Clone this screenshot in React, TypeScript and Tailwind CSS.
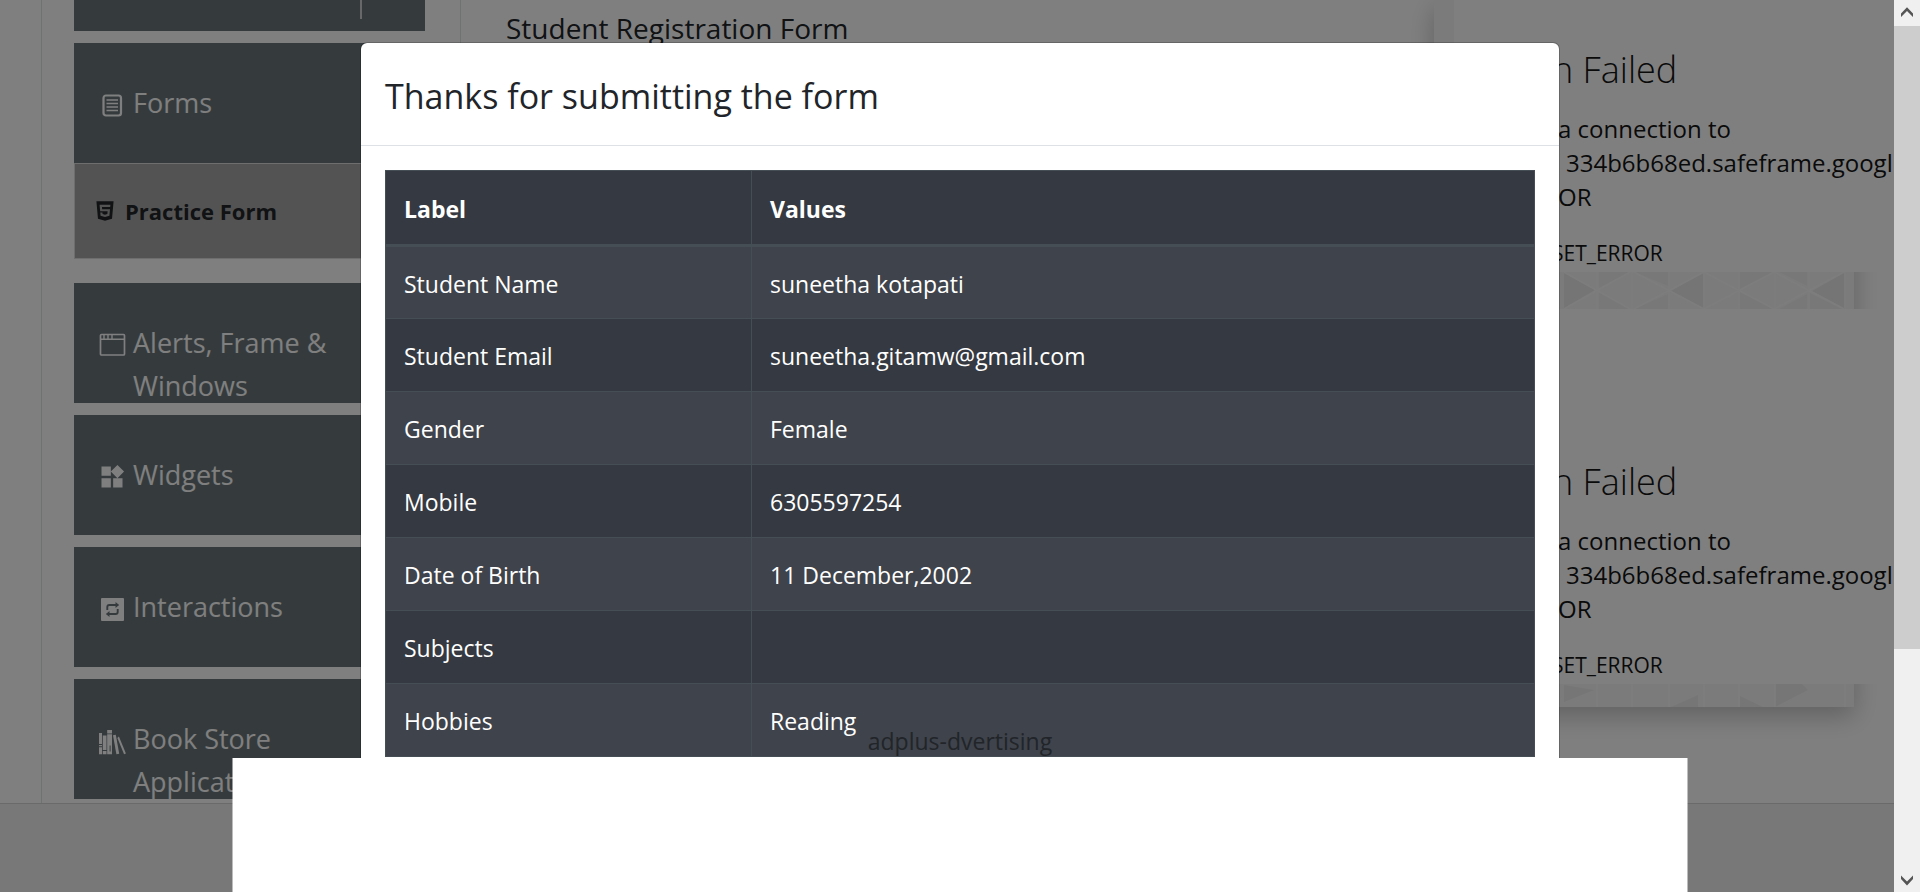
import type { ReactNode } from "react";
import { MdWidgets } from "react-icons/md";
import { AiFillHtml5 } from "react-icons/ai";

const FormsIcon = () => (
  <svg viewBox="0 0 28 28" className="size-7" fill="none" stroke="currentColor" aria-hidden="true">
    <rect x="5.5" y="4.500" width="17.500" height="20" rx="2.500" strokeWidth="2.200" />
    <path d="M8.5 9h11.500M8.5 12.500h11.500M8.5 16h11.500M8.5 19.500h11.500" strokeWidth="1.300" />
  </svg>
);

const WindowIcon = () => (
  <svg viewBox="0 0 28 28" className="size-7" fill="none" stroke="currentColor" aria-hidden="true">
    <rect x="2.500" y="3.5" width="24" height="20.5" rx="1" strokeWidth="1.7" />
    <path d="M2 8.200h24.500M6 3.5v4.500M10 3.5v4.500M14 3.5v4.500" strokeWidth="1.4" />
  </svg>
);

const RepeatIcon = () => (
  <svg viewBox="0 0 28 28" className="size-7" aria-hidden="true">
    <rect x="3" y="3" width="23" height="23" rx="1" fill="currentColor" />
    <g fill="none" stroke="#6b767b" strokeWidth="1.9">
      <path d="M9.3 15v-3q0-2 2-2h7.500M19.700 14v3q0 2-2 2h-7.500" />
    </g>
    <path d="M17.500 7l3.700 3-3.700 3zM11.500 16l-3.700 3 3.700 3z" fill="#6b767b" />
  </svg>
);

const BooksIcon = () => (
  <svg viewBox="0 0 28 28" className="size-7" fill="currentColor" aria-hidden="true">
    <path d="M1 6h3v11H1zM1 18h3v1.200H1zM1 20.200h3v7H1z" />
    <path d="M4.800 8.500h3.700v14.500H4.800zM4.800 24h3.700v3.200H4.800z" />
    <path
      fillRule="evenodd"
      d="M9.200 3h4.800v24.200H9.200zM11.600 18.500v6h1v-6zM9.200 6.500v.8h4.800v-.8z"
    />
    <path d="M15 8.200l2.800-.5 3.400 19-2.800.5z" />
    <path d="M19.400 11l1.500-1.400 7 16.800-1.800.8z" />
  </svg>
);

const rows: { label: string; value: string }[] = [
  { label: "Student Name", value: "suneetha kotapati" },
  { label: "Student Email", value: "suneetha.gitamw@gmail.com" },
  { label: "Gender", value: "Female" },
  { label: "Mobile", value: "6305597254" },
  { label: "Date of Birth", value: "11 December,2002" },
  { label: "Subjects", value: "" },
  { label: "Hobbies", value: "Reading" },
];

function MenuGroup({ icon, label }: { icon: ReactNode; label: string }) {
  return (
    <a href="#" className="flex h-[120px] overflow-hidden bg-[#6b767b] pt-[38px] pl-6 text-white">
      <span className="mt-2 flex h-8 w-7 shrink-0 items-center justify-center">{icon}</span>
      <span className="ml-[7px] w-[220px] text-[27px] leading-[43px]">{label}</span>
    </a>
  );
}

function Sidebar() {
  return (
    <nav className="flex w-[351px] shrink-0 flex-col gap-3">
      <div className="flex h-[31px] justify-end bg-[#6b767b] pr-[63px]">
        <span className="h-[19px] w-0.5 bg-[#d0d0d0]" />
      </div>
      <div className="mb-3">
        <MenuGroup icon={<FormsIcon />} label="Forms" />
        <a
          href="#"
          className="flex h-24 items-center gap-2 border border-[#dcdcdc] bg-[#a7a7a7] pl-[18px] text-[22px] font-bold text-[#212529]"
        >
          <AiFillHtml5 className="size-6" />
          Practice Form
        </a>
      </div>
      <MenuGroup icon={<WindowIcon />} label="Alerts, Frame & Windows" />
      <MenuGroup icon={<MdWidgets className="size-7" />} label="Widgets" />
      <MenuGroup icon={<RepeatIcon />} label="Interactions" />
      <MenuGroup icon={<BooksIcon />} label="Book Store Application" />
    </nav>
  );
}

function FailedFrame() {
  return (
    <section className="ml-5 flex h-[375px] w-[440px] shrink-0 flex-col justify-end overflow-hidden bg-white pb-1 pl-[98px] whitespace-nowrap text-[#141414]">
      <h2 className="text-[36px] leading-[48px] font-light">n Failed</h2>
      <p className="mt-[18px] flex flex-col pl-1.5 text-[24px] leading-[34px]">
        <span>a connection to</span>
        <span className="pl-2">334b6b68ed.safeframe.googl</span>
        <span>OR</span>
      </p>
      <p className="mt-6 text-[21px] leading-[30px]">SET_ERROR</p>
    </section>
  );
}

function AdPanel() {
  return (
    <aside className="mr-10 flex h-[707px] w-[420px] shrink-0 flex-col justify-end bg-[#f7f7f7] shadow-[0_9px_24px_rgba(0,0,0,0.24)]">
      <FailedFrame />
      <svg viewBox="0 0 420 37" className="h-[37px] w-full shrink-0" aria-hidden="true">
        <g fill="#f1f1f1">
          <path d="M165 0h31l-31 16zM165 37V20l31 17zM200 0h34v14zM200 37h34V22z" />
          <path d="M306 0h34l-34 17zM306 37V20l34 17zM345 0h28v14zM345 37h28V22zM376 37V21l32 16z" />
        </g>
        <path d="M130 1l31 17-31 18zM269 1v35l-32-17zM410 1v35l-32-17z" fill="#eaeaea" />
        <g stroke="#fafafa" strokeWidth="1.5">
          <path d="M163 0v37M198 0v37M235 0v37M270 0v37M305 0v37M341 0v37M375 0v37M411 0v37" />
          <path d="M130 0l66 37M130 37l66-37M200 0l70 37M200 37l70-37M270 0l70 37M270 37l70-37M340 0l70 37M340 37l70-37" />
        </g>
      </svg>
      <FailedFrame />
      <svg viewBox="0 0 420 23" className="h-[23px] w-full shrink-0" aria-hidden="true">
        <path d="M130 1l30 5-30 12zM237 23l27-12v12zM306 12l23 11h-23zM341 0h27l6 6-33 17z" fill="#ededed" />
        <path d="M163 0v23M198 0v23M235 0v23M270 0v23M305 0v23M341 0v23M411 0v23" stroke="#fbfbfb" strokeWidth="1.5" />
      </svg>
    </aside>
  );
}

function ResultDialog() {
  return (
    <div
      role="dialog"
      aria-labelledby="result-title"
      className="absolute top-[42px] left-1/2 w-[1200px] -translate-x-1/2 rounded-[7px] border border-black/20 bg-white bg-clip-padding text-[#212529]"
    >
      <header className="border-b border-[#dee2e6] px-6 pt-[26px] pb-[22px]">
        <h1 id="result-title" className="text-[34px] leading-[54px]">
          Thanks for submitting the form
        </h1>
      </header>
      <div className="p-6">
        <table className="w-full table-fixed border-collapse text-left text-[23px] leading-9 text-white">
          <thead>
            <tr className="h-[75px] bg-[#353941]">
              <th className="w-[366px] border border-b-3 border-[#454d55] px-[18px] pt-0.5">Label</th>
              <th className="border border-b-3 border-[#454d55] px-[18px] pt-0.5">Values</th>
            </tr>
          </thead>
          <tbody>
            {rows.map((row) => (
              <tr key={row.label} className="h-[73px] odd:bg-[#3f434b] even:bg-[#353941]">
                <td className="border border-[#454d55] px-[18px] pt-0.5">{row.label}</td>
                <td className="border border-[#454d55] px-[18px] pt-0.5">{row.value}</td>
              </tr>
            ))}
          </tbody>
        </table>
      </div>
    </div>
  );
}

function ScrollTrack() {
  return (
    <div className="flex w-[26px] shrink-0 flex-col bg-[#f0f0f0]">
      <svg viewBox="0 0 26 26" className="size-[26px]" aria-hidden="true">
        <path d="M7 13.500L13 7.200l6 6.300v3.500L13 11l-6 6z" fill="#555" />
      </svg>
      <div className="h-[623px] bg-[#cdcdcd]" />
      <svg viewBox="0 0 26 26" className="mt-auto size-[26px]" aria-hidden="true">
        <path d="M7 9.500v3.500l6 6.500 6-6.500V9.500L13 15.500z" fill="#555" />
      </svg>
    </div>
  );
}

export default function App() {
  return (
    <div className="relative flex h-screen overflow-hidden bg-white font-['Open_Sans','Noto_Sans',sans-serif]">
      <div className="relative flex min-w-0 flex-1 flex-col overflow-hidden">
        <div className="ml-[41px] flex h-[803px] shrink-0 border-l border-[#dee2e6] pl-8">
          <Sidebar />
          <main className="ml-[35px] flex-1 border-l border-[#dee2e6] pt-2 pl-[45px] text-[#212529]">
            <h2 className="text-[28px] leading-10">Student Registration Form</h2>
          </main>
          <AdPanel />
        </div>
        <footer className="flex-1 border-t border-[#d5d5d5] bg-[#f1f1f1]" />
        <div className="absolute inset-0 bg-black/50" />
      </div>
      <ScrollTrack />
      <ResultDialog />
      <div className="absolute bottom-0 left-1/2 flex w-[1455px] -translate-x-1/2 flex-col text-center text-[23px] leading-[34px] text-[#212529]">
        <span>adplus-dvertising</span>
        <div className="h-[134px] bg-white" />
      </div>
    </div>
  );
}
